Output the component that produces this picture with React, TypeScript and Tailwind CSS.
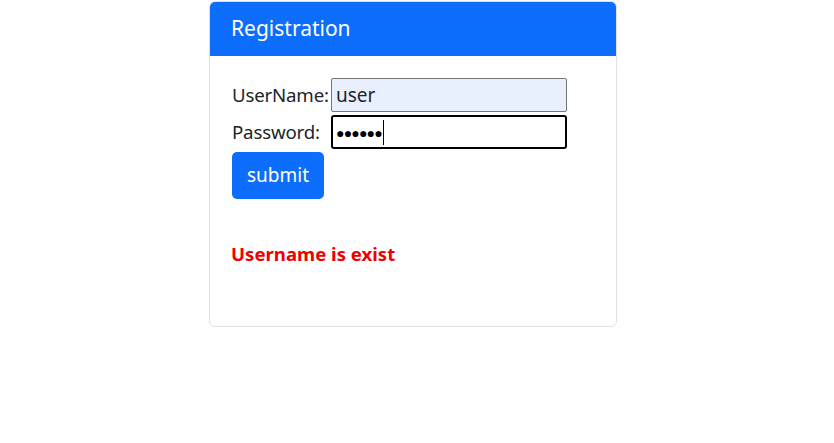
export default function App() {
  return (
    <div className="w-[834px] h-[443px] bg-white font-['Noto_Sans',sans-serif] text-[#212529] pt-px">
      <div className="ml-[209px] w-[408px] h-[326px] rounded-md border border-[#dee2e6] overflow-hidden">
        <div className="h-[54px] bg-[#0d6efd] text-white text-[21px] pl-[21px] flex items-center">
          Registration
        </div>
        <div className="pl-[22px] pt-[22px]">
          <div className="flex items-center h-[34px]">
            <span className="w-[99px] text-[18.7px] tracking-[-0.2px]">UserName:</span>
            <div className="w-[236px] h-[34px] bg-[#e8f0fe] border border-[#767676] rounded-[2px] text-[19px] pl-[4px] flex items-center">
              user
            </div>
          </div>
          <div className="flex items-center h-[34px] mt-[3px]">
            <span className="w-[99px] text-[18.7px] tracking-[-0.2px]">Password:</span>
            <div className="w-[236px] h-[34px] border-2 border-black rounded-[3px] pl-[3px] flex items-center">
              <span className="text-[14px] tracking-[-0.8px] text-black">●●●●●●</span>
              <span className="w-px h-[25px] bg-black ml-[1px]" />
            </div>
          </div>
          <button className="mt-[3px] w-[92px] h-[47px] bg-[#0d6efd] text-white text-[19px] rounded-[5px] flex items-center justify-center">
            submit
          </button>
          <div className="mt-[41px] text-[18.6px] font-bold text-[#ee0000] -ml-px">Username is exist</div>
        </div>
      </div>
    </div>
  );
}
